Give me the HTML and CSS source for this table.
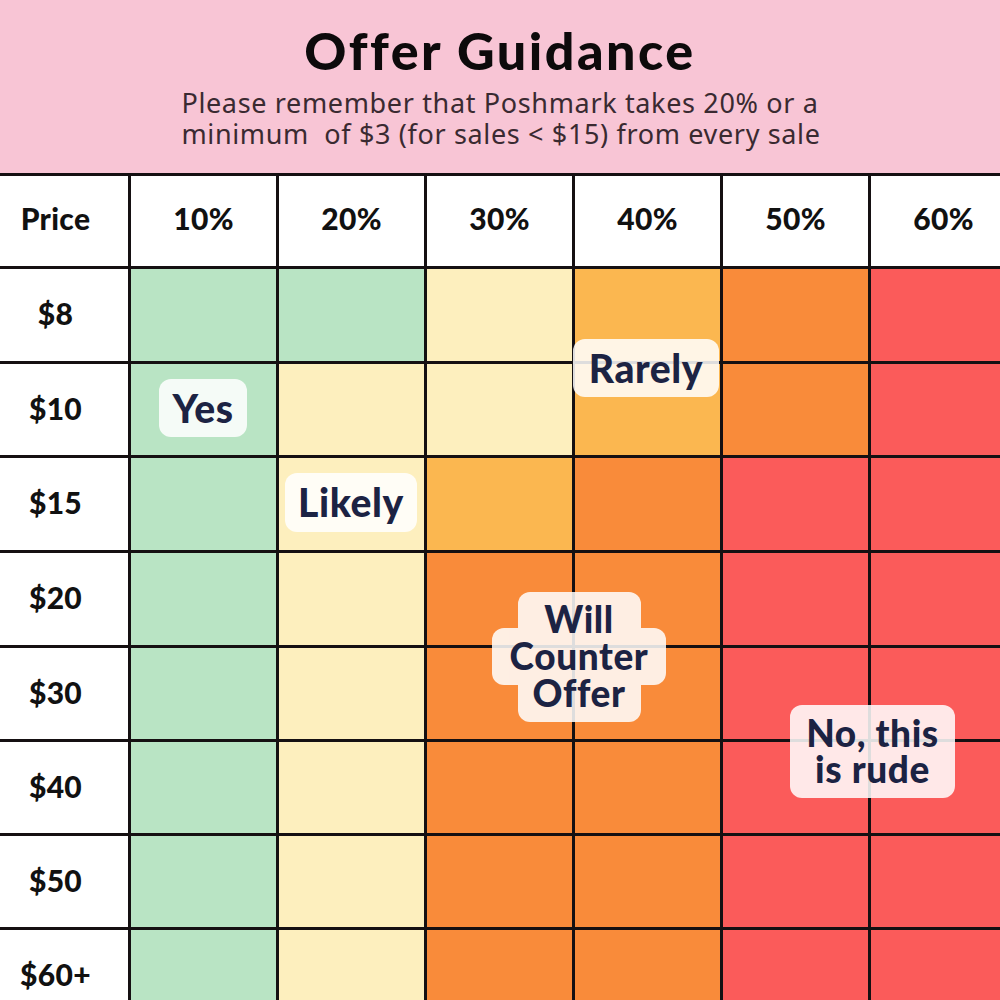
FILE: index.html
```html
<!DOCTYPE html>
<html lang="en">
<head>
<meta charset="utf-8">
<title>Offer Guidance</title>
<link rel="stylesheet" href="styles.css">
</head>
<body>
<header class="banner">
  <h1 class="title">Offer Guidance</h1>
  <p class="subtitle">Please remember that Poshmark takes 20% or a<br>minimum&nbsp; of $3 (for sales &lt; $15) from every sale</p>
</header>
<main class="table-wrap">
  <div class="grid">
    <div class="cell head">Price</div>
    <div class="cell head">10%</div>
    <div class="cell head">20%</div>
    <div class="cell head">30%</div>
    <div class="cell head">40%</div>
    <div class="cell head">50%</div>
    <div class="cell head">60%</div>

    <div class="cell label">$8</div>
    <div class="cell c-green"></div><div class="cell c-green"></div><div class="cell c-cream"></div><div class="cell c-amber"></div><div class="cell c-orange"></div><div class="cell c-red"></div>

    <div class="cell label">$10</div>
    <div class="cell c-green"></div><div class="cell c-cream"></div><div class="cell c-cream"></div><div class="cell c-amber"></div><div class="cell c-orange"></div><div class="cell c-red"></div>

    <div class="cell label">$15</div>
    <div class="cell c-green"></div><div class="cell c-cream"></div><div class="cell c-amber"></div><div class="cell c-orange"></div><div class="cell c-red"></div><div class="cell c-red"></div>

    <div class="cell label">$20</div>
    <div class="cell c-green"></div><div class="cell c-cream"></div><div class="cell c-orange"></div><div class="cell c-orange"></div><div class="cell c-red"></div><div class="cell c-red"></div>

    <div class="cell label">$30</div>
    <div class="cell c-green"></div><div class="cell c-cream"></div><div class="cell c-orange"></div><div class="cell c-orange"></div><div class="cell c-red"></div><div class="cell c-red"></div>

    <div class="cell label">$40</div>
    <div class="cell c-green"></div><div class="cell c-cream"></div><div class="cell c-orange"></div><div class="cell c-orange"></div><div class="cell c-red"></div><div class="cell c-red"></div>

    <div class="cell label">$50</div>
    <div class="cell c-green"></div><div class="cell c-cream"></div><div class="cell c-orange"></div><div class="cell c-orange"></div><div class="cell c-red"></div><div class="cell c-red"></div>

    <div class="cell label">$60+</div>
    <div class="cell c-green"></div><div class="cell c-cream"></div><div class="cell c-orange"></div><div class="cell c-orange"></div><div class="cell c-red"></div><div class="cell c-red"></div>
  </div>

  <div class="badge badge-yes">Yes</div>
  <div class="badge badge-likely">Likely</div>
  <div class="badge badge-rarely">Rarely</div>
  <div class="badge-counter">
    <svg class="counter-shape" width="174" height="130" viewBox="0 0 174 130">
      <g opacity="0.86" fill="#ffffff">
        <rect x="26" y="0" width="123" height="130" rx="12"/>
        <rect x="0" y="36" width="174" height="57" rx="12"/>
      </g>
    </svg>
    <div class="counter-text">Will<br>Counter<br>Offer</div>
  </div>
  <div class="badge badge-rude">No, this<br>is rude</div>
</main>
</body>
</html>
```
FILE: styles.css
```css
html, body {
  margin: 0;
  padding: 0;
}
body {
  width: 1000px;
  height: 1000px;
  overflow: hidden;
  background: #ffffff;
  font-family: "Lato", "Liberation Sans", sans-serif;
}
.banner {
  height: 173px;
  box-sizing: border-box;
  background: #f8c5d5;
  display: flex;
  flex-direction: column;
  align-items: center;
  padding-top: 22px;
}
.title {
  margin: 0;
  font-family: "Lato", sans-serif;
  font-weight: 900;
  font-size: 52px;
  line-height: 56px;
  color: #0d0a0b;
  letter-spacing: 2.5px;
}
.subtitle {
  margin: 9px 0 0 0;
  font-family: "Noto Sans", "Liberation Sans", sans-serif;
  font-size: 27px;
  line-height: 31px;
  color: #3a2a31;
  text-align: left;
  letter-spacing: 0.65px;
  padding-left: 2px;
}
.table-wrap {
  position: relative;
  width: 1000px;
  overflow: hidden;
  height: 827px;
}
.grid {
  display: grid;
  margin-left: -20px;
  grid-template-columns: repeat(7, 145px);
  grid-template-rows: 90px 92px 91px 92px 92px 91px 91px 91px 91px;
  gap: 3px;
  padding: 3px 3px 0 3px;
  background: #151012;
  width: max-content;
}
.cell {
  background: #ffffff;
  display: flex;
  align-items: center;
  justify-content: center;
  font-family: "Lato", sans-serif;
  font-weight: 900;
  font-size: 30px;
  letter-spacing: 0.3px;
  color: #111111;
}
.head {
  padding-bottom: 6px;
}
.label {
  padding-bottom: 4px;
}
.c-green { background: #b9e4c4; }
.c-cream { background: #fdefbe; }
.c-amber { background: #fbb750; }
.c-orange { background: #f98b3a; }
.c-red { background: #fb5b5a; }

.badge {
  position: absolute;
  box-sizing: border-box;
  display: flex;
  align-items: center;
  justify-content: center;
  text-align: center;
  background: rgba(255, 255, 255, 0.86);
  border-radius: 12px;
  font-family: "Lato", sans-serif;
  font-weight: 900;
  font-size: 39px;
  line-height: 37px;
  letter-spacing: 0.6px;
  color: #1c2343;
}
.badge-yes {
  left: 159px;
  top: 206px;
  width: 88px;
  height: 58px;
}
.badge-likely {
  left: 285px;
  top: 300px;
  width: 132px;
  height: 59px;
}
.badge-rarely {
  left: 573px;
  top: 166px;
  width: 146px;
  height: 58px;
}
.badge-rude {
  left: 790px;
  top: 532px;
  width: 165px;
  height: 93px;
  padding-bottom: 2px;
  font-size: 37px;
  line-height: 36px;
}
.badge-counter {
  position: absolute;
  left: 492px;
  top: 419px;
  width: 174px;
  height: 130px;
}
.counter-shape {
  display: block;
}
.counter-text {
  position: absolute;
  left: 0;
  top: 8px;
  width: 174px;
  text-align: center;
  font-family: "Lato", sans-serif;
  font-weight: 900;
  font-size: 37px;
  line-height: 37px;
  letter-spacing: 0.6px;
  color: #1c2343;
}
```
